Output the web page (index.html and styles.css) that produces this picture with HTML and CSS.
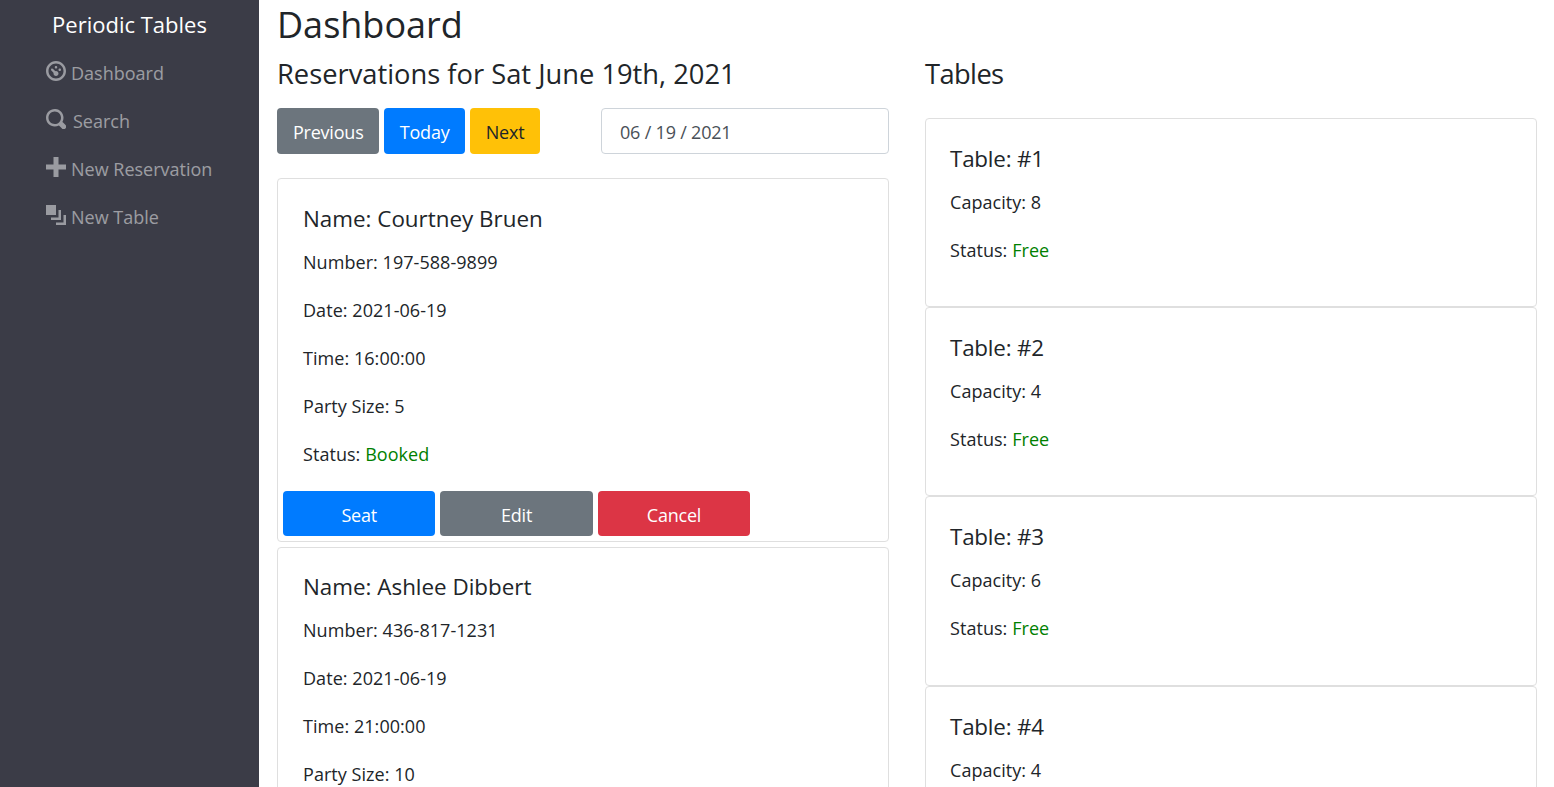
FILE: index.html
```html
<!DOCTYPE html>
<html lang="en">
<head>
    <meta charset="UTF-8">
    <meta name="viewport" content="width=device-width, initial-scale=1.0">
    <title>Periodic Tables</title>
    <link rel="stylesheet" href="styles.css">
</head>
<body>
    <div class="app">
        <nav class="sidebar">
            <div class="brand">Periodic Tables</div>
            <a class="nav-link" href="#">
                <svg class="icon" viewBox="0 0 8 8"><path d="M4 0c-2.2 0-4 1.8-4 4s1.8 4 4 4 4-1.8 4-4-1.8-4-4-4zm0 1c1.66 0 3 1.34 3 3s-1.34 3-3 3-3-1.34-3-3 1.34-3 3-3zm0 1c-.28 0-.5.22-.5.5s.22.5.5.5.5-.22.5-.5-.22-.5-.5-.5zm-1.66 1a.5.5 0 0 0-.19.84l.91.91c-.02.08-.06.16-.06.25 0 .55.45 1 1 1s1-.45 1-1-.45-1-1-1c-.09 0-.17.04-.25.06l-.91-.91a.5.5 0 0 0-.44-.16.5.5 0 0 0-.06 0zm3.16 0c-.28 0-.5.22-.5.5s.22.5.5.5.5-.22.5-.5-.22-.5-.5-.5z"/></svg>
                Dashboard
            </a>
            <a class="nav-link" href="#">
                <svg class="icon" viewBox="0 0 8 8"><path d="M3.5 0c-1.93 0-3.5 1.57-3.5 3.5s1.57 3.5 3.5 3.5c.59 0 1.17-.14 1.66-.41a1 1 0 0 0 .13.13l1 1a1.02 1.02 0 1 0 1.44-1.44l-1-1a1 1 0 0 0-.16-.13c.27-.49.44-1.06.44-1.66 0-1.93-1.57-3.5-3.5-3.5zm0 1c1.39 0 2.5 1.11 2.5 2.5 0 .66-.24 1.27-.66 1.72-.01.01-.02.02-.03.03a1 1 0 0 0-.13.13c-.44.4-1.04.63-1.69.63-1.39 0-2.5-1.11-2.5-2.5s1.11-2.5 2.5-2.5z"/></svg>
                <span class="search-label">Search</span>
            </a>
            <a class="nav-link" href="#">
                <svg class="icon" viewBox="0 0 8 8"><path d="M3 0v3h-3v2h3v3h2v-3h3v-2h-3v-3h-2z"/></svg>
                New Reservation
            </a>
            <a class="nav-link" href="#">
                <svg class="icon" viewBox="0 0 8 8"><path d="M0 0v4h4v-4h-4zm5 2v3h-3v1h4v-4h-1zm2 2v3h-3v1h4v-4h-1z"/></svg>
                New Table
            </a>
        </nav>

        <main class="content">
            <h1>Dashboard</h1>
            <div class="columns">
                <section class="column">
                    <h3>Reservations for Sat June 19th, 2021</h3>
                    <div class="toolbar">
                        <div class="btn-group">
                            <button class="btn btn-gray" type="button">Previous</button>
                            <button class="btn btn-blue" type="button">Today</button>
                            <button class="btn btn-yellow" type="button">Next</button>
                        </div>
                        <input class="date-input" type="text" value="06 / 19 / 2021">
                    </div>

                    <div class="card res-card">
                        <h4>Name: Courtney Bruen</h4>
                        <p>Number: 197-588-9899</p>
                        <p>Date: 2021-06-19</p>
                        <p>Time: 16:00:00</p>
                        <p>Party Size: 5</p>
                        <p>Status: <span class="ok">Booked</span></p>
                        <div class="card-actions">
                            <button class="btn btn-wide btn-blue" type="button">Seat</button>
                            <button class="btn btn-wide btn-gray" type="button">Edit</button>
                            <button class="btn btn-wide btn-red" type="button">Cancel</button>
                        </div>
                    </div>
                    <div class="card res-card">
                        <h4>Name: Ashlee Dibbert</h4>
                        <p>Number: 436-817-1231</p>
                        <p>Date: 2021-06-19</p>
                        <p>Time: 21:00:00</p>
                        <p>Party Size: 10</p>
                    </div>
                </section>

                <section class="column">
                    <h3 class="tables-title">Tables</h3>
                    <div class="table-list">
                        <div class="card table-card">
                            <h4>Table: #1</h4>
                            <p>Capacity: 8</p>
                            <p>Status: <span class="ok">Free</span></p>
                        </div>
                        <div class="card table-card">
                            <h4>Table: #2</h4>
                            <p>Capacity: 4</p>
                            <p>Status: <span class="ok">Free</span></p>
                        </div>
                        <div class="card table-card">
                            <h4>Table: #3</h4>
                            <p>Capacity: 6</p>
                            <p>Status: <span class="ok">Free</span></p>
                        </div>
                        <div class="card table-card">
                            <h4>Table: #4</h4>
                            <p>Capacity: 4</p>
                        </div>
                    </div>
                </section>
            </div>
        </main>
    </div>
</body>
</html>
```

FILE: styles.css
```css
* {
    box-sizing: border-box;
}
html, body {
    height: 100%;
}
body {
    margin: 0;
    font-family: "Open Sans", "Noto Sans", sans-serif;
    font-size: 18px;
    color: #212529;
    background-color: white;
    overflow: hidden;
}
.app {
    display: flex;
    height: 787px;
}
.sidebar {
    width: 259px;
    flex-shrink: 0;
    background-color: #3b3c47;
}
.brand {
    color: white;
    font-size: 22px;
    line-height: 49px;
    text-align: center;
}
.nav-link {
    display: flex;
    align-items: center;
    height: 48px;
    padding-left: 46px;
    gap: 5px;
    color: rgba(255, 255, 255, 0.5);
    text-decoration: none;
    font-size: 18px;
}
.icon {
    width: 20px;
    height: 20px;
    fill: #9a9ba1;
    margin-top: -4px;
}
.search-label {
    margin-left: 2px;
}
.content {
    flex: 1;
    padding: 0 17px 0 18px;
    min-width: 0;
}
h1 {
    margin: 0;
    font-size: 36px;
    font-weight: 400;
    line-height: 50px;
}
h3 {
    margin: 0;
    font-size: 27.3px;
    font-weight: 400;
    line-height: 48px;
}
.tables-title {
    letter-spacing: -0.6px;
}
h4 {
    margin: 0;
    font-size: 22.4px;
    font-weight: 400;
    line-height: 32px;
}
p {
    margin: 0 0 21px;
    line-height: 27px;
    letter-spacing: 0.05px;
}
.columns {
    display: grid;
    grid-template-columns: 612px 612px;
    gap: 36px;
}
.toolbar {
    display: flex;
    justify-content: space-between;
    margin-top: 10px;
    margin-bottom: 24.4px;
}
.btn-group {
    display: flex;
    gap: 4.4px;
}
.btn {
    height: 46px;
    padding: 2px 15.9px 0;
    border: none;
    border-radius: 4px;
    font-family: inherit;
    font-size: 18px;
    letter-spacing: -0.2px;
    color: white;
}
.btn-gray {
    background-color: #6c757d;
}
.btn-blue {
    background-color: #007bff;
}
.btn-red {
    background-color: #dc3545;
}
.btn-yellow {
    background-color: #ffc107;
    color: #212529;
}
.date-input {
    width: 288px;
    height: 46px;
    padding: 2px 18px 0;
    border: 1px solid #ced4da;
    border-radius: 4px;
    font-family: inherit;
    font-size: 18px;
    letter-spacing: -0.2px;
    color: #495057;
}
.card {
    border: 1px solid #dfdfdf;
    border-radius: 4px;
    background-color: white;
}
.res-card {
    height: 363.3px;
    margin-bottom: 5px;
    padding: 23.6px 5px 0;
}
.res-card h4, .res-card p {
    margin-left: 20px;
}
.res-card h4 {
    margin-bottom: 14px;
}
.card-actions {
    display: flex;
    gap: 5px;
    margin-top: 23px;
}
.btn-wide {
    width: 152.4px;
    height: 45px;
    padding-top: 3px;
}
.table-list {
    margin-top: 20px;
}
.table-card {
    height: 189.2px;
    padding: 24px 24px 0;
}
.table-card h4 {
    margin-bottom: 14px;
    letter-spacing: -0.2px;
}
.ok {
    color: green;
}
```
